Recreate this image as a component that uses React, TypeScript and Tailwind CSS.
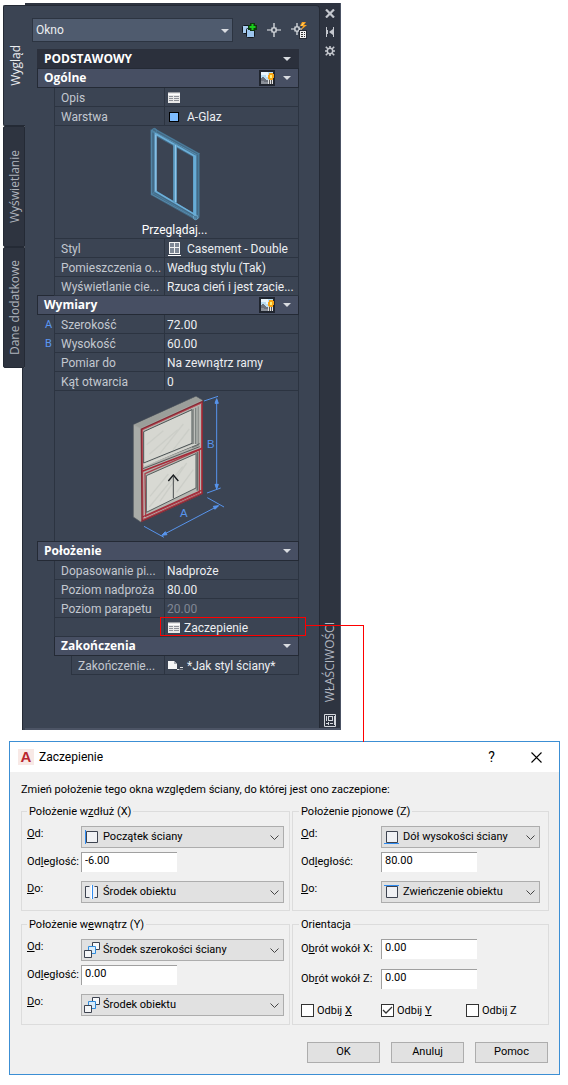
import { useState, type ReactNode } from "react";

type MarkKind = "start" | "center" | "bottom" | "top" | "stack";

function Caret() {
  return (
    <svg width="8" height="4" viewBox="0 0 8 4" className="shrink-0">
      <path d="M0 0h8L4 4z" fill="#d9dce1" />
    </svg>
  );
}

function SheetIcon() {
  return (
    <svg width="12" height="11" viewBox="0 0 12 11" className="shrink-0">
      <path d="M0 0h12v11H0z" fill="#e8e8e8" />
      <path d="M0 0h12v1H0z" fill="#9a9da3" />
      <path d="M0 2h12v1H0z" fill="#fff" />
      <path d="M1 4h4v1H1zM6 4h5v1H6zM1 6h4v1H1zM6 6h5v1H6zM1 8h4v1H1zM6 8h5v1H6z" fill="#8d9097" />
    </svg>
  );
}

function PictureIcon() {
  return (
    <svg width="16" height="16" viewBox="0 0 16 16" className="shrink-0">
      <path d="M0 0h16v16H0z" fill="#20252f" />
      <path d="M2 2h12v12H2z" fill="#b9ddf2" />
      <path d="M2 2h7v3H2zM7 5h3v2H7z" fill="#e9f4fb" />
      <path d="M2 8h1V7h2v1h1v1h1v1h2v4H2z" fill="#6c717b" />
      <path d="M2 11h3v1h4v2H2z" fill="#8b9099" />
      <path d="M9 10h5v4H9z" fill="#e2e2e2" />
      <path d="M10 10h1v4h-1zM12 10h1v4h-1z" fill="#555" />
      <path d="M9 5h1V3h4v1h1v4h-1v2h-4V9H9z" fill="#f7a416" />
      <path d="M11 5h2v3h-2z" fill="#fff07a" />
    </svg>
  );
}

function WindowIcon() {
  return (
    <svg width="13" height="14" viewBox="0 0 13 14" className="shrink-0">
      <path d="M1 0h11v12H1z" fill="#f2f2f2" />
      <path d="M2 1h4v4H2zM7 1h4v4H7zM2 6h4v5H2zM7 6h4v5H7z" fill="#7e8794" />
      <path d="M0 13h13v1H0z" fill="#fff" />
    </svg>
  );
}

function EndCapIcon() {
  return (
    <svg width="16" height="11" viewBox="0 0 16 11" className="shrink-0">
      <path d="M0 1h6l3 3v5H0z" fill="#f5f5f5" />
      <path d="M6 1v3h3z" fill="#a9adb3" />
      <path d="M9 9h2v1H9zM12 7h3v1h-3z" fill="#e0e0e0" />
      <path d="M11 9h4v1h-4z" fill="#80858e" />
    </svg>
  );
}

function AddSelectedIcon() {
  return (
    <svg width="16" height="15" viewBox="0 0 16 15">
      <rect x="1.5" y="2.5" width="8" height="8" rx="1" fill="#a9cdf0" stroke="#121820" />
      <rect x="5.5" y="5.5" width="8" height="9" rx="1" fill="#9cc5ee" stroke="#121820" />
      <path d="M9 0h5v2h2v5h-2v1H9V7H7V2h2z" fill="#10380f" />
      <path d="M10.500 1h2v2h2v2h-2v2h-2V5h-2V3h2z" fill="#18d11c" />
    </svg>
  );
}

function CrosshairIcon() {
  return (
    <svg width="14" height="14" viewBox="0 0 14 14">
      <path d="M7 0v5M7 9v5M0 7h5M9 7h5" stroke="#eceef1" strokeWidth="1.2" />
      <path d="M5 5h4v4H5z" fill="none" stroke="#eceef1" strokeWidth="1.2" />
    </svg>
  );
}

function QuickSelectIcon() {
  return (
    <svg width="16" height="17" viewBox="0 0 16 17">
      <path d="M6 1v4M6 9v4M0 7h4M8 7h3" stroke="#eceef1" strokeWidth="1.2" />
      <path d="M4 5h4v4H4z" fill="none" stroke="#eceef1" strokeWidth="1.2" />
      <path d="M11 0h4l-2 3h3l-6 5 2-4H9z" fill="#f7a021" />
      <path d="M12 1h1l-2 3h-1z" fill="#ffe07a" />
      <path d="M8 8h8v9H8z" fill="#262b35" />
      <path d="M9 9h6v7H9z" fill="#f2f2f2" />
      <path d="M10 10h2v1h-2zM13 10h1v1h-1zM10 12h2v1h-2zM13 12h1v1h-1zM10 14h2v1h-2zM13 14h1v1h-1z" fill="#333" />
    </svg>
  );
}

function CloseGlyph() {
  return (
    <svg width="10" height="9" viewBox="0 0 10 9">
      <path d="M1 .5l8 8M9 .5l-8 8" stroke="#c5c8ce" strokeWidth="2.2" />
    </svg>
  );
}

function AutoHideGlyph() {
  return (
    <svg width="10" height="10" viewBox="0 0 10 10">
      <path d="M1 0h1v10H1zM2 3h1v4H2zM8 0h1v10H8z" fill="#c5c8ce" />
      <path d="M4 5l4-3v6z" fill="#c5c8ce" />
    </svg>
  );
}

function GearGlyph() {
  return (
    <svg width="10" height="10" viewBox="0 0 10 10">
      <circle cx="5" cy="5" r="2.7" fill="none" stroke="#c5c8ce" strokeWidth="1.5" />
      <path
        d="M5 0v2M5 8v2M0 5h2M8 5h2M.8.8l2 2M7.200 7.200l2 2M9.200.800l-2 2M2.800 7.200l-2 2"
        stroke="#c5c8ce"
        strokeWidth="1.6"
      />
    </svg>
  );
}

function PaletteGlyph() {
  return (
    <svg width="12" height="13" viewBox="0 0 12 13">
      <path d="M.5.5h11v12H.5z" fill="none" stroke="#d4d7dc" />
      <path d="M2 2h1v5H2zM2 9h3v1H2zM4 2h5v1H4zM4 6h5v1H4zM4 2h1v5H4zM8 2h1v5H8zM4 8h1v3H4zM6 9h3v1H6zM10 2h1v9h-1z" fill="#d4d7dc" />
    </svg>
  );
}

function CasementPreview() {
  return (
    <svg width="52" height="96" viewBox="60 15 156 288">
      <path
        fillRule="evenodd"
        d="M64 28l12-7 136 76v192l-12 9L65 222zM84 48v162l108 66V108z"
        fill="#446a86"
      />
      <path d="M68 28v192l133 73V100z" fill="none" stroke="#5f9cc0" strokeWidth="2" />
      <path
        d="M76 24l133 74v188M74 34l124 68M72 216l128 74M66 26l10 10M200 102l12-5M66 222l12-10M200 284l10 8"
        fill="none"
        stroke="#4f87a8"
        strokeWidth="2"
      />
      <path d="M79 38v173l119 70V106z" fill="none" stroke="#6cb0da" strokeWidth="5" />
      <path d="M81 42v168" stroke="#9ccdf0" strokeWidth="3" />
      <path d="M138 70v175" stroke="#5c9dc3" strokeWidth="11" />
      <path d="M140 72v172" stroke="#9ccdf0" strokeWidth="3" />
      <path d="M197 104v178" stroke="#67acd6" strokeWidth="9" />
      <circle cx="200" cy="289" r="7" fill="none" stroke="#79b9de" strokeWidth="2" />
      <circle cx="76" cy="29" r="7" fill="none" stroke="#4f87a8" strokeWidth="2" />
    </svg>
  );
}

function DimensionPreview() {
  return (
    <svg width="100" height="147" viewBox="60 20 300 441">
      <path d="M70 115L258 30l20 12v280L92 407l-22-15z" fill="#a5a7a3" stroke="#555b60" strokeWidth="2" />
      <path d="M72 115L258 32l16 10L92 125z" fill="#9b9e9a" />
      <path d="M72 118l19 9v276l-19-13z" fill="#a9aca8" />
      <path d="M95 129L276 47v274L97 403z" fill="#b4b5b0" stroke="#842a35" strokeWidth="6" />
      <path d="M98 130L275 50v270L99 400z" fill="none" stroke="#d2505c" strokeWidth="2" />
      <path d="M101 136l145-66v101l-145 59z" fill="#d6d7d1" stroke="#4d5557" strokeWidth="3" />
      <path d="M246 70l20-10v118l-20 8z" fill="#7d8380" />
      <path d="M253 66v108M261 62v112" stroke="#c9cbc6" strokeWidth="3" />
      <path d="M101 238l168-66M99 247l170-66" stroke="#5b5f60" strokeWidth="3" />
      <path d="M101 232l148-59 14 0-162 68z" fill="#d5d6d0" />
      <path d="M105 262L268 191v127L107 390z" fill="#b6b8b2" stroke="#a8404b" strokeWidth="4" />
      <path d="M97 255l180-69" stroke="#a52a38" strokeWidth="5" />
      <path d="M109 268l149-66v103l-149 73z" fill="#d8d9d3" stroke="#565d5d" strokeWidth="3" />
      <path d="M262 197v116" stroke="#666d6b" strokeWidth="5" />
      <path
        d="M110 175l50-42M118 204l85-74M150 201l70-88M190 190l48-62M120 330l55-67M118 362l100-121M150 345l80-115M200 318l50-68"
        stroke="#cccec8"
        strokeWidth="4"
      />
      <path d="M97 392l178-80" stroke="#a52a38" strokeWidth="4" />
      <path d="M190 336v-66" stroke="#4a4d4f" strokeWidth="3" />
      <path d="M175 284l15-18 15 18" fill="none" stroke="#15181b" strokeWidth="4" />
      <g stroke="#5794ec" strokeWidth="3" fill="#5794ec">
        <path d="M282 44l42-14M291 320l41-15M292 334l50 28M102 420l60 33M320 40v266M158 446l166-87" fill="none" />
        <path d="M320 37l5 14h-10zM320 308l5-14h-10zM155 447l16-2-5-9zM326 358l-16 2 5 9z" />
      </g>
      <text x="291" y="186" fontSize="34" fill="#5794ec" className="font-['Liberation_Sans',sans-serif]">
        B
      </text>
      <text x="210" y="393" fontSize="34" fill="#5794ec" className="font-['Liberation_Sans',sans-serif]">
        A
      </text>
    </svg>
  );
}

function SideTab({ children, active, onClick }: { children: ReactNode; active: boolean; onClick: () => void }) {
  return (
    <button
      onClick={onClick}
      className={`flex h-[121px] items-center justify-center rounded-l-xs border-y border-l border-[#242a35] pl-0.5 font-['Open_Sans',sans-serif] ${
        active ? "bg-[#3b4453] text-[#eceef1]" : "border-r bg-[#2e3440] text-[#aeb3bc]"
      }`}
    >
      <span className="rotate-180 leading-4 [writing-mode:vertical-rl]">{children}</span>
    </button>
  );
}

function SectionHeader({ children, picture }: { children: ReactNode; picture?: boolean }) {
  return (
    <div className="-mt-px flex h-5 items-center border border-[#242a35] bg-[#474f63] pr-[7px] pl-1.5">
      <h3 className="flex-1 font-['Open_Sans',sans-serif] font-bold text-white">{children}</h3>
      {picture && <PictureIcon />}
      <button aria-label="Zwiń" className="pl-2">
        <Caret />
      </button>
    </div>
  );
}

function Row({ label, mark, children }: { label: string; mark?: string; children: ReactNode }) {
  return (
    <div className="flex h-[19px]">
      <span className="w-[17px] shrink-0 pt-px pl-2 text-[11px] leading-[18px] text-[#5b97f2]">{mark}</span>
      <span className="w-[110px] shrink-0 border-b border-l border-[#2c3441] pt-px pl-1.5 leading-[18px] whitespace-nowrap text-[#c3c8d0]">
        {label}
      </span>
      <div className="relative flex min-w-0 flex-1 items-center border-x border-b border-[#2c3441] pt-px pl-0.5 leading-[18px] whitespace-nowrap text-[#eceef1]">
        {children}
      </div>
    </div>
  );
}

function ValueInput({ label, value, disabled }: { label: string; value: string; disabled?: boolean }) {
  return (
    <input
      aria-label={label}
      defaultValue={value}
      disabled={disabled}
      className="w-full min-w-0 bg-transparent leading-[18px] outline-none disabled:text-[#808794]"
    />
  );
}

function PropertiesPalette() {
  const [tab, setTab] = useState(0);
  return (
    <section className="flex min-w-0 flex-1 pt-[3px] pl-[3px] font-['Roboto',sans-serif] text-xs">
      <div className="flex w-[22px] shrink-0 flex-col pt-0.5">
        {["Wygląd", "Wyświetlanie", "Dane dodatkowe"].map((name, i) => (
          <SideTab key={name} active={tab === i} onClick={() => setTab(i)}>
            {name}
          </SideTab>
        ))}
        <div className="w-[3px] flex-1 self-end border-l border-[#242a35] bg-[#3b4453]" />
      </div>
      <div className="flex min-w-0 flex-1 border-r border-b-2 border-[#4c5465] bg-[#2e3440] pt-0.5">
        <div className="min-w-0 flex-1 rounded-tr border-t border-r border-[#242a35] bg-[#3b4453] pb-[53px]">
          <div className="flex items-center pt-3 pr-3 pl-[7px]">
            <div className="relative flex h-6 flex-1 items-center border border-[#2c3441] bg-[#4f5b6e]">
              <select aria-label="Typ obiektu" className="w-full appearance-none bg-transparent pl-[3px] text-[#eceef1] outline-none">
                <option>Okno</option>
              </select>
              <span className="pointer-events-none absolute top-2.5 right-[3px]">
                <Caret />
              </span>
            </div>
            <button aria-label="Dodaj wybrane" className="ml-2">
              <AddSelectedIcon />
            </button>
            <button aria-label="Wybierz obiekty" className="ml-2.5">
              <CrosshairIcon />
            </button>
            <button aria-label="Szybki wybór" className="ml-2.5">
              <QuickSelectIcon />
            </button>
          </div>

          <div className="pt-[7px] pr-5 pl-3">
            <div className="flex h-5 items-center bg-[#2b303c] pr-2 pl-[7px]">
              <h2 className="flex-1 font-['Open_Sans',sans-serif] font-bold text-white">PODSTAWOWY</h2>
              <Caret />
            </div>
            <SectionHeader picture>Ogólne</SectionHeader>
            <Row label="Opis">
              <button aria-label="Opis" className="pl-px">
                <SheetIcon />
              </button>
            </Row>
            <Row label="Warstwa">
              <span className="mr-2 ml-0.5 size-2.5 border border-black bg-[#7dbcff]" />
              A-Glaz
            </Row>
            <div className="ml-[17px] flex h-[113px] flex-col items-center border-x border-b border-[#2c3441] pr-1">
              <CasementPreview />
              <button className="leading-4 text-white">Przeglądaj...</button>
            </div>
            <Row label="Styl">
              <span className="mr-1.5 ml-px">
                <WindowIcon />
              </span>
              Casement - Double
            </Row>
            <Row label="Pomieszczenia o...">Według stylu (Tak)</Row>
            <Row label="Wyświetlanie cie...">Rzuca cień i jest zacie...</Row>
            <SectionHeader picture>Wymiary</SectionHeader>
            <Row label="Szerokość" mark="A">
              <ValueInput label="Szerokość" value="72.00" />
            </Row>
            <Row label="Wysokość" mark="B">
              <ValueInput label="Wysokość" value="60.00" />
            </Row>
            <Row label="Pomiar do">Na zewnątrz ramy</Row>
            <Row label="Kąt otwarcia">
              <ValueInput label="Kąt otwarcia" value="0" />
            </Row>
            <div className="ml-[17px] flex h-[151px] items-center justify-center border-x border-[#2c3441] pl-1.5">
              <DimensionPreview />
            </div>
            <SectionHeader>Położenie</SectionHeader>
            <Row label="Dopasowanie pi...">Nadproże</Row>
            <Row label="Poziom nadproża">
              <ValueInput label="Poziom nadproża" value="80.00" />
            </Row>
            <Row label="Poziom parapetu">
              <ValueInput label="Poziom parapetu" value="20.00" disabled />
            </Row>
            <Row label="">
              <button className="flex items-center gap-1 pl-px">
                <SheetIcon />
                Zaczepienie
              </button>
              {/* callout frame and the leader down to the dialog */}
              <span className="pointer-events-none absolute -top-px -right-2 -left-[5px] h-[19px] border border-[#f00]" />
              <span className="pointer-events-none absolute top-[7px] left-full z-10 ml-2 h-[117px] w-[58px] border-t border-r border-[#f00]" />
            </Row>
            <div className="pl-[17px]">
              <SectionHeader>Zakończenia</SectionHeader>
              <div className="flex h-[19px] pl-[17px]">
                <span className="w-[93px] shrink-0 border-b border-l border-[#2c3441] pt-px pl-1.5 leading-[18px] whitespace-nowrap text-[#c3c8d0]">
                  Zakończenie...
                </span>
                <div className="flex flex-1 items-center gap-[3px] border-x border-b border-[#2c3441] pt-px pl-[3px] leading-[18px] whitespace-nowrap text-[#eceef1]">
                  <EndCapIcon />
                  *Jak styl ściany*
                </div>
              </div>
            </div>
          </div>
        </div>
        <div className="flex w-[20px] shrink-0 flex-col items-center pb-px">
          <div className="flex flex-col items-center gap-[3px]">
            <button aria-label="Zamknij paletę" className="flex h-4 items-center">
              <CloseGlyph />
            </button>
            <button aria-label="Autoukrywanie" className="flex h-4 items-center">
              <AutoHideGlyph />
            </button>
            <button aria-label="Ustawienia palety" className="flex h-4 items-center">
              <GearGlyph />
            </button>
          </div>
          <span className="mt-auto mb-3 rotate-180 font-['Open_Sans',sans-serif] leading-4 text-[#b4b9c2] [writing-mode:vertical-rl]">
            WŁAŚCIWOŚCI
          </span>
          <PaletteGlyph />
        </div>
      </div>
    </section>
  );
}

function MarkIcon({ kind }: { kind: MarkKind }) {
  if (kind === "stack") {
    return (
      <svg width="16" height="16" viewBox="0 0 16 16">
        <path d="M8.500.500h7v7h-7z" fill="#f7f8fa" stroke="#3d4350" />
        <path d="M4.500 4.500h7v7h-7z" fill="#d9ecfb" stroke="#2f8bdc" />
        <path d="M.500 8.500h7v7h-7z" fill="#f4f5f7" stroke="#3d4350" />
      </svg>
    );
  }
  return (
    <svg width="16" height="16" viewBox="0 0 16 16">
      {kind === "center" ? (
        <>
          <path d="M2 2h12v12H2z" fill="#f0f1f4" />
          <path d="M5.500 2.500h-4v11h4M10.500 2.500h3v11h-3" fill="none" stroke="#3d4350" />
          <path d="M7 1h2v14H7z" fill="#fff" />
          <path d="M8 1h1v14H8z" fill="#2f8bf0" />
        </>
      ) : (
        <path d="M2.500 2.500h11v11h-11z" fill="#f0f1f4" stroke="#3d4350" />
      )}
      {kind === "start" && <path d="M1 1h1v14H1z" fill="#2f8bf0" />}
      {kind === "bottom" && <path d="M0 14h15v1H0z" fill="#2f8bf0" />}
      {kind === "top" && <path d="M0 1h15v1H0z" fill="#2f8bf0" />}
    </svg>
  );
}

function Combo({ id, mark, value }: { id: string; mark: MarkKind; value: string }) {
  return (
    <div className="relative flex h-[22px] min-w-0 flex-1 items-center border border-[#adadad] bg-[#e1e1e1]">
      <span className="pointer-events-none absolute left-0.5">
        <MarkIcon kind={mark} />
      </span>
      <select id={id} className="h-full w-full appearance-none bg-transparent pt-px pl-[21px] outline-none">
        <option>{value}</option>
      </select>
      <svg width="9" height="5" viewBox="0 0 9 5" className="pointer-events-none absolute right-1">
        <path d="M.5.5l4 4 4-4" fill="none" stroke="#444" />
      </svg>
    </div>
  );
}

function NumberBox({ id, value }: { id: string; value: string }) {
  return (
    <input
      id={id}
      defaultValue={value}
      className="h-5 w-24 border-t border-l border-[#a0a0a0] bg-white pb-1 pl-[3px] outline-none"
    />
  );
}

function OffsetFields({
  id,
  from,
  fromMark,
  distance,
  to,
  toMark,
  labelClass,
}: {
  id: string;
  from: string;
  fromMark: MarkKind;
  distance: string;
  to: string;
  toMark: MarkKind;
  labelClass: string;
}) {
  return (
    <>
      <div className="flex">
        <label htmlFor={`${id}-from`} className={`${labelClass} leading-4`}>
          <u>O</u>d:
        </label>
        <Combo id={`${id}-from`} mark={fromMark} value={from} />
      </div>
      <div className="mt-1 flex">
        <label htmlFor={`${id}-dist`} className={`${labelClass} leading-5`}>
          Od<u>l</u>egłość:
        </label>
        <NumberBox id={`${id}-dist`} value={distance} />
      </div>
      <div className="mt-[9px] flex">
        <label htmlFor={`${id}-to`} className={`${labelClass} leading-4`}>
          <u>D</u>o:
        </label>
        <Combo id={`${id}-to`} mark={toMark} value={to} />
      </div>
    </>
  );
}

function FlipBox({ children, checked }: { children: ReactNode; checked?: boolean }) {
  return (
    <label className="flex items-center gap-[3px] whitespace-nowrap">
      <span className="relative flex size-[13px]">
        <input
          type="checkbox"
          defaultChecked={checked}
          className="peer size-[13px] appearance-none border border-[#333] bg-white"
        />
        <svg
          viewBox="0 0 13 13"
          className="pointer-events-none absolute inset-0 hidden size-[13px] peer-checked:block"
        >
          <path d="M2 6l3 3 6-6" fill="none" stroke="#333" strokeWidth="1.3" />
        </svg>
      </span>
      <span>{children}</span>
    </label>
  );
}

function AnchorDialog() {
  const group = "min-w-0 border border-[#dcdcdc] pt-[7px] pb-[7px]";
  const legend = "px-0.5 leading-[15px]";
  return (
    <div
      role="dialog"
      aria-label="Zaczepienie"
      className="mr-2 ml-[9px] border border-[#3c8fd4] bg-[#f0f0f0] font-['Roboto',sans-serif] text-[11px] text-black"
    >
      <div className="flex h-[30px] items-center bg-white pl-2 text-xs">
        <span className="flex size-4 items-center justify-center bg-[#f8e9e6] font-['Liberation_Sans',sans-serif] text-[15px] leading-4 font-bold text-[#b9262f]">
          A
        </span>
        <h2 className="flex-1 pl-[5px]">Zaczepienie</h2>
        <button aria-label="Pomoc kontekstowa" className="w-[45px] text-sm leading-5">
          ?
        </button>
        <button aria-label="Zamknij" className="flex w-[45px] justify-center">
          <svg width="11" height="11" viewBox="0 0 11 11">
            <path d="M.5.5l10 10M10.500.500l-10 10" stroke="#000" strokeWidth="1.1" />
          </svg>
        </button>
      </div>
      <div className="pt-2.5 pr-2.5 pb-[11px] pl-[11px]">
        <p className="mb-[7px] leading-[15px]">
          Zmień położenie tego okna względem ściany, do której jest ono zaczepione:
        </p>
        <div className="grid grid-cols-[269fr_257fr] gap-x-0.5 gap-y-1.5">
          <fieldset className={`${group} px-[5px]`}>
            <legend className={legend}>
              Położenie w<u>z</u>dłuż (X)
            </legend>
            <OffsetFields
              id="x"
              from="Początek ściany"
              fromMark="start"
              distance="-6.00"
              to="Środek obiektu"
              toMark="center"
              labelClass="w-[54px] shrink-0"
            />
          </fieldset>
          <fieldset className={`${group} px-2`}>
            <legend className={`${legend} -ml-0.5`}>
              Położenie p<u>i</u>onowe (Z)
            </legend>
            <OffsetFields
              id="z"
              from="Dół wysokości ściany"
              fromMark="bottom"
              distance="80.00"
              to="Zwieńczenie obiektu"
              toMark="top"
              labelClass="w-20 shrink-0"
            />
          </fieldset>
          <fieldset className={`${group} px-[5px]`}>
            <legend className={legend}>
              Położenie w<u>e</u>wnątrz (Y)
            </legend>
            <OffsetFields
              id="y"
              from="Środek szerokości ściany"
              fromMark="stack"
              distance="0.00"
              to="Środek obiektu"
              toMark="stack"
              labelClass="w-[54px] shrink-0"
            />
          </fieldset>
          <fieldset className={`${group} px-2`}>
            <legend className={`${legend} -ml-0.5`}>Orientacja</legend>
            <div className="flex">
              <label htmlFor="rot-x" className="w-20 shrink-0 leading-5">
                O<u>b</u>rót wokół X:
              </label>
              <NumberBox id="rot-x" value="0.00" />
            </div>
            <div className="mt-2.5 flex">
              <label htmlFor="rot-z" className="w-20 shrink-0 leading-5">
                Ob<u>r</u>ót wokół Z:
              </label>
              <NumberBox id="rot-z" value="0.00" />
            </div>
            <div className="mt-[15px] grid grid-cols-[80px_85px_1fr] leading-[13px]">
              <FlipBox>
                Odbij <u>X</u>
              </FlipBox>
              <FlipBox checked>
                Odbij <u>Y</u>
              </FlipBox>
              <FlipBox>
                Odbi<u>j</u> Z
              </FlipBox>
            </div>
          </fieldset>
        </div>
        <div className="mt-[17px] flex justify-end gap-[11px] pr-px">
          {["OK", "Anuluj", "Pomoc"].map((name) => (
            <button key={name} className="h-[21px] w-[73px] border border-[#adadad] bg-[#e1e1e1]">
              {name}
            </button>
          ))}
        </div>
      </div>
    </div>
  );
}

export default function App() {
  return (
    <main className="bg-white pb-2.5">
      <div className="flex pr-[227px] pb-[11px]">
        <PropertiesPalette />
      </div>
      <AnchorDialog />
    </main>
  );
}
